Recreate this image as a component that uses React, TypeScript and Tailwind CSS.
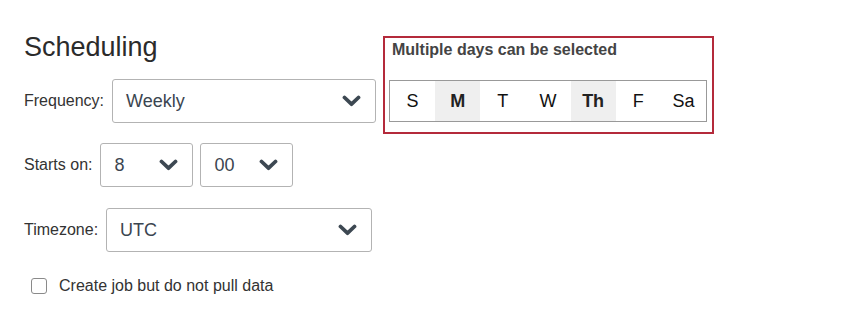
import React from "react";

const days = [
  { label: "S", on: false },
  { label: "M", on: true },
  { label: "T", on: false },
  { label: "W", on: false },
  { label: "Th", on: true },
  { label: "F", on: false },
  { label: "Sa", on: false },
];

function Chevron() {
  return (
    <svg width="19" height="12" viewBox="0 0 19 12" className="shrink-0">
      <path
        d="M2.5 2.5 L9.5 9.2 L16.5 2.5"
        fill="none"
        stroke="#3d4852"
        strokeWidth={3.8}
        strokeLinecap="round"
        strokeLinejoin="round"
      />
    </svg>
  );
}

function Select({ value, width }: { value: string; width: string }) {
  return (
    <div
      className={`${width} h-[44px] flex items-center justify-between pl-[13px] pr-[14px] border border-[#b3b3b3] rounded-[3px] bg-white text-[18px] text-[#3b4550]`}
    >
      <span>{value}</span>
      <Chevron />
    </div>
  );
}

export default function App() {
  return (
    <div className="w-[850px] h-[325px] bg-white flex items-start pt-8 pl-6 font-['Liberation_Sans',Arial,sans-serif]">
      <div className="w-[352px] flex flex-col">
        <h1 className="text-[27px] leading-[30px] text-[#2b2b2b]">Scheduling</h1>

        <div className="mt-[17px] flex items-center">
          <span className="text-[16px] text-[#333] mr-2">Frequency:</span>
          <Select value="Weekly" width="w-[265px]" />
        </div>

        <div className="mt-[20px] flex items-center">
          <span className="text-[16px] text-[#333] mr-2">Starts on:</span>
          <Select value="8" width="w-[93px]" />
          <div className="ml-[7px]">
            <Select value="00" width="w-[93px]" />
          </div>
        </div>

        <div className="mt-[21px] flex items-center">
          <span className="text-[16px] text-[#333] mr-2">Timezone:</span>
          <Select value="UTC" width="w-[266px]" />
        </div>

        <label className="mt-[24px] h-5 flex items-center">
          <span className="ml-[7px] w-4 h-4 border border-[#8a8a8a] rounded-[3px] bg-white" />
          <span className="ml-3 text-[16px] text-[#333]">
            Create job but do not pull data
          </span>
        </label>
      </div>

      <div className="ml-[7px] mt-1 w-[331px] h-[98px] border-2 border-[#b42a3b] pt-[3px] pl-1">
        <p className="ml-[3px] text-[16px] leading-[18px] font-bold text-[#444]">
          Multiple days can be selected
        </p>
        <div className="mt-[21px] w-[318px] h-[42px] border border-[#999] flex">
          {days.map((d) => (
            <div
              key={d.label}
              className={
                d.on
                  ? "flex-1 flex items-center justify-center bg-[#efefef] font-bold text-[18px] text-[#222]"
                  : "flex-1 flex items-center justify-center text-[18px] text-[#111]"
              }
            >
              {d.label}
            </div>
          ))}
        </div>
      </div>
    </div>
  );
}
